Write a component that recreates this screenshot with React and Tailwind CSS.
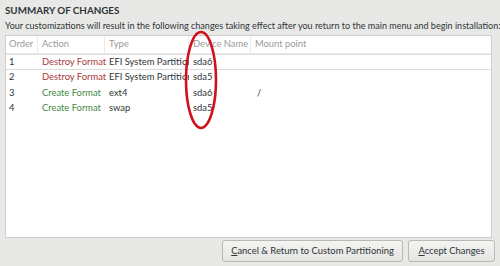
import React from 'react';

const rows = [
    { order: '1', action: 'Destroy Format', destroy: true, type: 'EFI System Partition', device: 'sda6', mount: '' },
    { order: '2', action: 'Destroy Format', destroy: true, type: 'EFI System Partition', device: 'sda5', mount: '' },
    { order: '3', action: 'Create Format', destroy: false, type: 'ext4', device: 'sda6', mount: '/' },
    { order: '4', action: 'Create Format', destroy: false, type: 'swap', device: 'sda5', mount: '' },
];

const cols = 'grid grid-cols-[32px_67px_84px_62px_1fr]';

const App = () => {
    return (
        <div className="relative w-[500px] h-[266px] bg-[#e8e8e7] text-[#2e3436] overflow-hidden" style={{ fontFamily: 'Lato, "Liberation Sans", sans-serif' }}>
            <div className="flex flex-col h-full px-[5px]">
                <h1 className="pt-[2px] h-[16px] text-[9.8px] font-bold leading-[16px]">SUMMARY OF CHANGES</h1>
                <p className="h-[15px] mt-[2px] text-[9.05px] leading-[15px] whitespace-nowrap">
                    Your customizations will result in the following changes taking effect after you return to the main menu and begin installation:
                </p>

                <div className="mt-[2px] w-[487px] h-[203px] bg-white border border-[#cfcfcd] text-[9.4px]">
                    <div className={`${cols} h-[18px] items-center text-[#9a9c99] border-b border-[#ececea]`}>
                        <div className="pl-[3px] h-full flex items-center border-r border-[#ececea] whitespace-nowrap">Order</div>
                        <div className="pl-[4px] h-full flex items-center border-r border-[#ececea] whitespace-nowrap">Action</div>
                        <div className="pl-[4px] h-full flex items-center border-r border-[#ececea] whitespace-nowrap">Type</div>
                        <div className="pl-[4px] h-full flex items-center border-r border-[#ececea] whitespace-nowrap">Device Name</div>
                        <div className="pl-[4px] h-full flex items-center whitespace-nowrap">Mount point</div>
                    </div>
                    {rows.map((r, i) => (
                        <div key={r.order} className={`${cols} h-[15.5px] items-center ${i === 0 ? 'border-y border-[#dcdcda]' : ''}`}>
                            <div className="pl-[3px]">{r.order}</div>
                            <div className={`pl-[4px] whitespace-nowrap ${r.destroy ? 'text-[#a93a3a]' : 'text-[#3f8a3f]'}`}>{r.action}</div>
                            <div className="pl-[4px] whitespace-nowrap overflow-hidden">{r.type}</div>
                            <div className="pl-[4px]">{r.device}</div>
                            <div className="pl-[6px]">{r.mount}</div>
                        </div>
                    ))}
                </div>

                <div className="flex justify-end gap-[5px] mt-[2px]">
                    <button className="w-[181px] h-[22px] rounded-[3px] border border-[#b8b8b5] bg-gradient-to-b from-[#f4f4f3] to-[#e4e4e2] text-[9.4px] text-[#2e3436] whitespace-nowrap">
                        <span className="underline">C</span>ancel &amp; Return to Custom Partitioning
                    </button>
                    <button className="w-[87px] h-[22px] rounded-[3px] border border-[#b8b8b5] bg-gradient-to-b from-[#f4f4f3] to-[#e4e4e2] text-[9.4px] text-[#2e3436] whitespace-nowrap">
                        <span className="underline">A</span>ccept Changes
                    </button>
                </div>
            </div>

            <svg className="absolute left-[183px] top-[29px]" width="36" height="102" viewBox="0 0 36 102">
                <ellipse cx="18" cy="51" rx="15" ry="48" fill="none" stroke="#d0101c" strokeWidth="2.6" />
            </svg>
        </div>
    );
};

export default App;
